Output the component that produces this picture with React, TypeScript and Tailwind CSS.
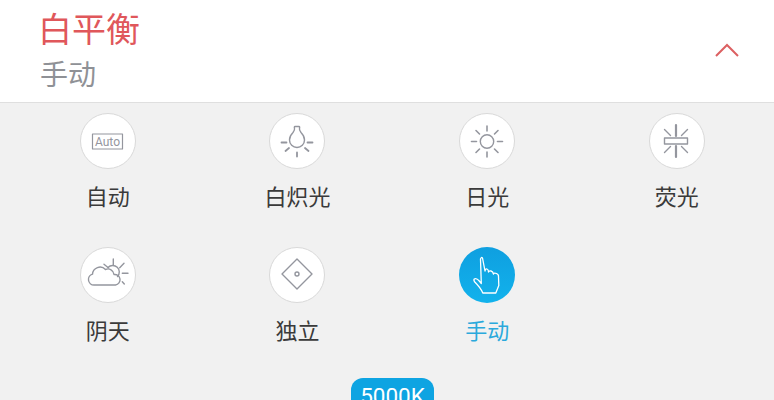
const S = "#94969e";

function Circle({ children, active = false }: { children: React.ReactNode; active?: boolean }) {
  return (
    <div className={active ? "h-14 w-14 rounded-full bg-gradient-to-b from-[#0f9fe0] to-[#12b2ec]" : "h-14 w-14 rounded-full border-[1.5px] border-[#d9d9d9] bg-white"}>
      <svg viewBox="0 0 56 56" className={active ? "block h-14 w-14" : "m-[-1.5px] block h-14 w-14"} fill="none" stroke={active ? "#ffffff" : S} strokeWidth="1.4" strokeLinecap="round" strokeLinejoin="round">
        {children}
      </svg>
    </div>
  );
}

const Item = ({ label, active = false, children }: { label: string; active?: boolean; children: React.ReactNode }) => (
  <div className="flex h-[134px] flex-col items-center">
    <Circle active={active}>{children}</Circle>
    <div className={`mt-[9.5px] text-[22px] leading-[32px] ${active ? "text-[#2aa9dc]" : "text-[#3a3a3a]"}`}>{label}</div>
  </div>
);

export default function App() {
  return (
    <div className="h-[400px] w-[774px] overflow-hidden bg-[#f1f1f1]" style={{ fontFamily: '"Noto Sans CJK SC", "Noto Sans", sans-serif' }}>
      <header className="flex h-[103px] items-center justify-between border-b border-[#dfdfdf] bg-white pl-[38px] pr-[35px]">
        <div>
          <div className="mt-[-2px] text-[34px] leading-[44px] text-[#e0575b]">白平衡</div>
          <div className="mt-[2px] pl-[2px] text-[28px] leading-[42px] text-[#8f9196]">手动</div>
        </div>
        <svg width="24" height="14" viewBox="0 0 24 14" fill="none" stroke="#dc6062" strokeWidth="2" className="mt-[-2px]">
          <path d="M1 13 L12 2 L23 13" />
        </svg>
      </header>
      <div className="grid grid-cols-[repeat(4,189.67px)] pl-[13px] pt-[10px]">
        <Item label="自动">
          <rect x="13.5" y="21" width="30" height="15" strokeWidth="1.2" />
          <text x="28.5" y="33" textAnchor="middle" fontSize="12" fill={S} stroke="none" fontFamily="Roboto, sans-serif">Auto</text>
        </Item>
        <Item label="白炽光">
          <path d="M26 13.5 h4 q1 0 .5 1.5 q-.5 2 1.5 4.5 q3.5 3.5 3.5 7.5 a7.5 7.5 0 0 1 -15 0 q0 -4 3.5 -7.5 q2 -2.5 1.5 -4.5 q-.5 -1.5 .5 -1.5 z" />
          <path d="M12.5 29.5 h5 M38.5 29.5 h5 M28 39.5 v4 M16.5 38 l3.5 -3 M39.5 38 l-3.5 -3" strokeWidth="1.8" />
        </Item>
        <Item label="日光">
          <circle cx="28" cy="28.5" r="6.7" />
          <path d="M28 13 v5 M28 39 v5 M12.5 28.5 h5 M38.5 28.5 h5 M17 17.5 l3.5 3.5 M39 17.5 l-3.5 3.5 M17 39.5 l3.5 -3.5 M39 39.5 l-3.5 -3.5" strokeWidth="1.6" />
        </Item>
        <Item label="荧光">
          <rect x="16.5" y="25" width="23" height="6" />
          <path d="M28 12 v11 M28 33 v11" strokeWidth="2.2" />
          <path d="M16.5 16.5 l6 6 M39.5 16.5 l-6 6 M16.5 39.5 l6 -6 M39.5 39.5 l-6 -6" />
        </Item>
        <Item label="阴天">
          <path d="M15 38 a5.5 5.5 0 0 1 -1.5 -10.8 a7.5 7.5 0 0 1 13 -4.7 a6 6 0 0 1 8.5 5 a5.2 5.2 0 0 1 1.5 10.5 z" />
          <path d="M29 20.5 a6.5 6.5 0 1 1 9.5 9" />
          <path d="M34.3 12 v6 M45 16.3 l-4.3 4.4 M43.3 26.3 h5.7 M43.3 34.7 l2 2.3 M25 17.3 l4.3 3.4" />
        </Item>
        <Item label="独立">
          <path d="M28 12 L43 27 L28 42 L13 27 Z" />
          <circle cx="28" cy="27" r="2" />
        </Item>
        <Item label="手动" active>
          <path d="M21.5 12 q1 -2.5 2 -1 l2.5 13 q.5 -2.5 2 -2 q1.5 .5 1.5 3 q.5 -1.5 2.5 -1 q2 .5 2.5 3 q.5 -1.5 3 -.5 q2.3 1 2 3 l.3 9 l-3 7.5 h-13 q-2 -5 -8 -11 q-1.5 -2 -.5 -3 q2 -1.5 5 2 l2 2.5 z" strokeWidth="1.3" />
        </Item>
      </div>
      <div className="flex justify-center pl-[11px]">
        <div className="mt-[-3px] flex h-[34px] w-[83px] items-start justify-center rounded-[12px] bg-[#0ea4e2] pt-[2px] text-[22.5px] leading-[32px] text-white" style={{ fontFamily: "Roboto, sans-serif" }}>5000K</div>
      </div>
    </div>
  );
}
